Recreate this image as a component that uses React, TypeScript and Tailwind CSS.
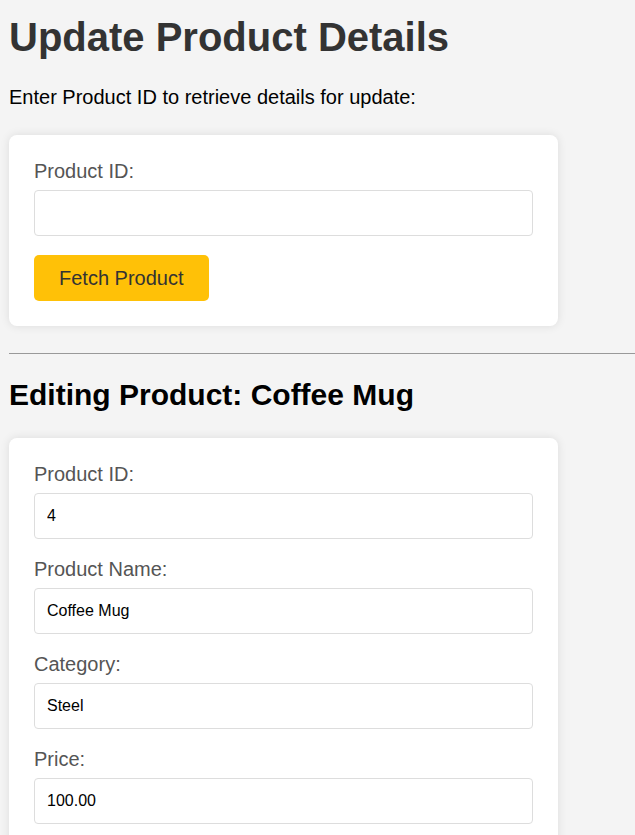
import React from "react";

type Field = {
  label: string;
  value: string;
};

const fields: Field[] = [
  { label: "Product ID:", value: "4" },
  { label: "Product Name:", value: "Coffee Mug" },
  { label: "Category:", value: "Steel" },
  { label: "Price:", value: "100.00" },
];

const inputClass =
  "block w-full h-[46px] px-3 border border-[#ddd] rounded-[4px] bg-white text-[16px] text-black outline-none";

const labelClass = "block text-[20px] leading-[23px] text-[#555] mb-[7px]";

const App: React.FC = () => {
  return (
    <div className="min-h-screen bg-[#f4f4f4] pl-[9px] pt-[14px] pb-10 font-['Liberation_Sans',Arial,sans-serif] text-black">
      {/* Header */}
      <h1 className="text-[40px] leading-[46px] font-bold text-[#333]">
        Update Product Details
      </h1>
      <p className="mt-[26px] text-[20px] leading-[23px]">
        Enter Product ID to retrieve details for update:
      </p>

      {/* Fetch card */}
      <div className="mt-[26px] w-[549px] bg-white rounded-[8px] p-[25px] shadow-[0_0_10px_rgba(0,0,0,0.1)]">
        <label className={labelClass}>Product ID:</label>
        <input type="text" className={inputClass} defaultValue="" />
        <button className="mt-[19px] h-[46px] px-[25px] bg-[#ffc107] text-[#333] text-[20px] rounded-[5px]">
          Fetch Product
        </button>
      </div>

      <hr className="mt-[27px] border-0 border-t border-[#999]" />

      {/* Edit form */}
      <h2 className="mt-[24px] text-[30px] leading-[34px] font-bold">
        Editing Product: Coffee Mug
      </h2>

      <div className="mt-[26px] w-[549px] bg-white rounded-[8px] p-[25px] shadow-[0_0_10px_rgba(0,0,0,0.1)]">
        {fields.map((f) => (
          <div key={f.label} className="mb-[19px] last:mb-0">
            <label className={labelClass}>{f.label}</label>
            <input type="text" className={inputClass} defaultValue={f.value} />
          </div>
        ))}
      </div>
    </div>
  );
};

export default App;
